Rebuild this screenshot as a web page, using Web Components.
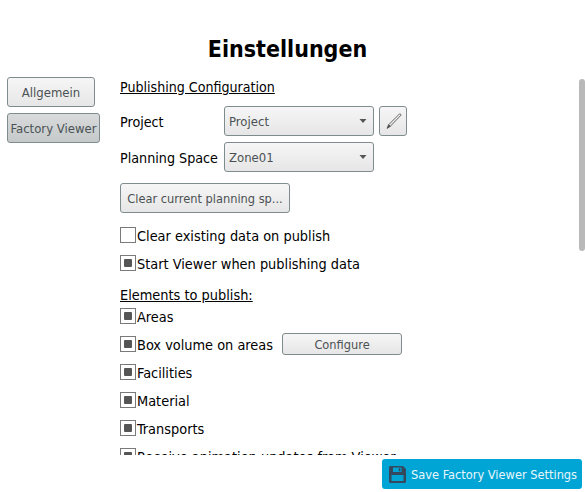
<!DOCTYPE html>
<html lang="de">
<head>
<meta charset="utf-8">
<title>Einstellungen</title>
<style>
  html, body { margin: 0; height: 100%; background: #fff; }
  body { font-family: "DejaVu Sans", sans-serif; font-stretch: condensed; font-size: 14.4px; color: #000; }
</style>
</head>
<body>
<settings-app>
  <span slot="title">Einstellungen</span>

  <nav-button slot="nav" style="--w:88px">Allgemein</nav-button>
  <nav-button slot="nav" style="--w:93px" selected>Factory Viewer</nav-button>

  <section-label style="font-size:14.1px">Publishing Configuration</section-label>
  <form-row label="Project">
    <combo-box style="--w:150px">Project</combo-box>
    <icon-button></icon-button>
  </form-row>
  <form-row label="Planning Space">
    <combo-box style="--w:150px">Zone01</combo-box>
  </form-row>
  <push-button style="--w:170px;--h:30px;margin:11px 0 8px">Clear current planning sp...</push-button>
  <check-row>Clear existing data on publish</check-row>
  <check-row checked>Start Viewer when publishing data</check-row>
  <section-label style="margin-top:9px;line-height:18px">Elements to publish:</section-label>
  <check-row checked>Areas</check-row>
  <check-row checked>Box volume on areas<push-button slot="after" style="--w:120px;--h:22px">Configure</push-button></check-row>
  <check-row checked>Facilities</check-row>
  <check-row checked>Material</check-row>
  <check-row checked>Transports</check-row>
  <check-row checked>Receive animation updates from Viewer</check-row>

  <save-button slot="footer">Save Factory Viewer Settings</save-button>
</settings-app>

<script>
const buttonFace = `
  border: 1px solid #7f8c8d;
  border-radius: 3px;
  background: linear-gradient(#f6f6f6, #e6e6e6);
  color: #4b5154;
  box-sizing: border-box;
`;

class SettingsApp extends HTMLElement {
  constructor() {
    super();
    this.attachShadow({ mode: "open" }).innerHTML = `
      <style>
        :host { display: flex; flex-direction: column; height: 492px; overflow: hidden; }
        .title {
          height: 77px;
          box-sizing: border-box;
          padding: 33px 10px 0 0;
          text-align: center;
          font-size: 23px;
          font-weight: bold;
          line-height: 32px;
          flex: none;
        }
        .main { display: flex; height: 378px; flex: none; }
        .nav { width: 120px; padding-left: 7px; box-sizing: border-box; display: flex; flex-direction: column; align-items: flex-start; gap: 6px; flex: none; }
        .content { flex: 1; min-width: 0; overflow: hidden; display: flex; flex-direction: column; align-items: flex-start; }
        .track { width: 6px; flex: none; padding-top: 2px; }
        .thumb { height: 172px; background: #b9b9b9; border-radius: 3px; }
        .footer { display: flex; justify-content: flex-end; padding: 4px 3px 0 0; }
      </style>
      <div class="title"><slot name="title"></slot></div>
      <div class="main">
        <div class="nav"><slot name="nav"></slot></div>
        <div class="content"><slot></slot></div>
        <div class="track"><div class="thumb"></div></div>
      </div>
      <div class="footer"><slot name="footer"></slot></div>
    `;
  }
}

class NavButton extends HTMLElement {
  constructor() {
    super();
    this.attachShadow({ mode: "open" }).innerHTML = `
      <style>
        :host { display: flex; align-items: center; justify-content: center; width: var(--w); height: 30px; font-size: 13px; white-space: nowrap; ${buttonFace} cursor: pointer; }
        :host([selected]) { background: linear-gradient(#d8dadb, #c5c9ca); }
      </style>
      <slot></slot>
    `;
  }
}

class SectionLabel extends HTMLElement {
  constructor() {
    super();
    this.attachShadow({ mode: "open" }).innerHTML = `
      <style>
        :host { display: block; height: 16px; line-height: 20px; text-decoration: underline; flex: none; }
      </style>
      <slot></slot>
    `;
  }
}

class FormRow extends HTMLElement {
  constructor() {
    super();
    this.attachShadow({ mode: "open" }).innerHTML = `
      <style>
        :host { display: flex; align-items: center; gap: 5px; height: 30px; margin-top: 6px; flex: none; }
        :host(:first-of-type) { margin-top: 13px; }
        .label { width: 99px; flex: none; white-space: nowrap; padding-top: 1px; font-size: 14.2px; }
      </style>
      <span class="label"></span>
      <slot></slot>
    `;
    this.shadowRoot.querySelector(".label").textContent = this.getAttribute("label");
  }
}

class ComboBox extends HTMLElement {
  constructor() {
    super();
    this.attachShadow({ mode: "open" }).innerHTML = `
      <style>
        :host { display: flex; align-items: center; width: var(--w); height: 30px; padding: 0 6px 0 4px; font-size: 13px; ${buttonFace} }
        .text { flex: 1; }
        svg { display: block; }
      </style>
      <span class="text"><slot></slot></span>
      <svg width="8" height="4" viewBox="0 0 8 4"><path d="M0.5 0H7.5L4 4Z" fill="#555"/></svg>
    `;
  }
}

class IconButton extends HTMLElement {
  constructor() {
    super();
    this.attachShadow({ mode: "open" }).innerHTML = `
      <style>
        :host { display: flex; align-items: center; justify-content: center; width: 28px; height: 30px; ${buttonFace} }
        svg { display: block; }
      </style>
      <svg width="18" height="18" viewBox="0 0 18 18" fill="none" stroke="#555" stroke-width="0.9">
        <path d="M15.6 1.8 4.6 12.8 6.2 14.4 17 3.2C17 2.4 16.4 1.8 15.6 1.8Z"/>
        <path d="M4.6 12.8 3 16.4 6.2 14.4Z" fill="#444"/>
      </svg>
    `;
  }
}

class PushButton extends HTMLElement {
  constructor() {
    super();
    this.attachShadow({ mode: "open" }).innerHTML = `
      <style>
        :host { display: flex; align-items: center; justify-content: center; flex: none; width: var(--w); height: var(--h); font-size: 12.7px; white-space: nowrap; ${buttonFace} }
      </style>
      <slot></slot>
    `;
  }
}

class CheckRow extends HTMLElement {
  constructor() {
    super();
    this.attachShadow({ mode: "open" }).innerHTML = `
      <style>
        :host { display: flex; align-items: center; gap: 1px; height: 28px; flex: none; white-space: nowrap; }
        .box { width: 16px; height: 16px; box-sizing: border-box; border: 1px solid #7a7a7a; background: #fff; padding: 3px; flex: none; }
        .mark { width: 8px; height: 8px; background: #555; border-radius: 1px; display: none; }
        :host([checked]) .mark { display: block; }
        .text { padding-top: 1px; }
        .after { margin-left: 8px; }
      </style>
      <span class="box"><span class="mark"></span></span>
      <span class="text"><slot></slot></span>
      <span class="after"><slot name="after"></slot></span>
    `;
  }
}

class SaveButton extends HTMLElement {
  constructor() {
    super();
    this.attachShadow({ mode: "open" }).innerHTML = `
      <style>
        :host { display: flex; align-items: center; gap: 5px; width: 200px; height: 30px; padding-left: 7px; box-sizing: border-box; border-radius: 3px; background: #00a5d5; color: #e9f6fb; font-size: 12.7px; white-space: nowrap; }
        svg { display: block; flex: none; }
      </style>
      <svg width="17" height="17" viewBox="0 0 17 17">
        <path fill="#34495e" fill-rule="evenodd" d="M1.5 0H14L17 3V15.5A1.5 1.5 0 0 1 15.5 17H1.5A1.5 1.5 0 0 1 0 15.5V1.5A1.5 1.5 0 0 1 1.5 0ZM4 1.5V6H12.5V1.5ZM9.8 2.2H11.4V5.2H9.8ZM2.5 9V15H14.5V9Z"/>
      </svg>
      <slot></slot>
    `;
  }
}

customElements.define("settings-app", SettingsApp);
customElements.define("nav-button", NavButton);
customElements.define("section-label", SectionLabel);
customElements.define("form-row", FormRow);
customElements.define("combo-box", ComboBox);
customElements.define("icon-button", IconButton);
customElements.define("push-button", PushButton);
customElements.define("check-row", CheckRow);
customElements.define("save-button", SaveButton);
</script>
</body>
</html>
